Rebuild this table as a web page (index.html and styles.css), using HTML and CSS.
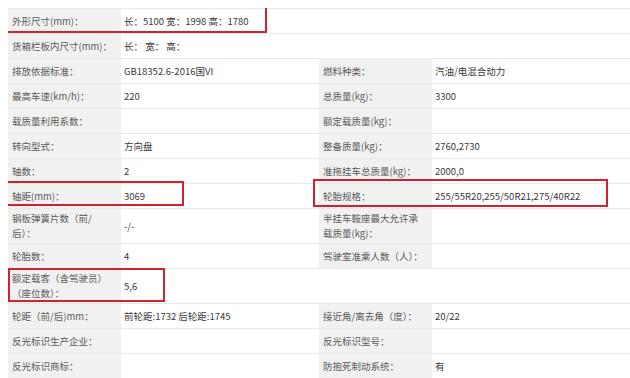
FILE: index.html
```html
<!DOCTYPE html>
<html lang="zh-CN">
<head>
<meta charset="utf-8">
<title>车辆参数</title>
<link rel="stylesheet" href="styles.css">
</head>
<body>
<div class="sheet">
  <div class="grid">
    <div class="k">外形尺寸(mm)：</div><div class="v span3">长：5100 宽：1998 高：1780</div>
    <div class="k">货箱栏板内尺寸(mm)：</div><div class="v span3">长： 宽： 高：</div>
    <div class="k">排放依据标准：</div><div class="v">GB18352.6-2016国VI</div><div class="k">燃料种类：</div><div class="v">汽油/电混合动力</div>
    <div class="k">最高车速(km/h)：</div><div class="v">220</div><div class="k">总质量(kg)：</div><div class="v">3300</div>
    <div class="k">载质量利用系数：</div><div class="v"></div><div class="k">额定载质量(kg)：</div><div class="v"></div>
    <div class="k">转向型式：</div><div class="v">方向盘</div><div class="k">整备质量(kg)：</div><div class="v">2760,2730</div>
    <div class="k">轴数：</div><div class="v">2</div><div class="k">准拖挂车总质量(kg)：</div><div class="v">2000,0</div>
    <div class="k">轴距(mm)：</div><div class="v">3069</div><div class="k">轮胎规格：</div><div class="v">255/55R20,255/50R21,275/40R22</div>
    <div class="k">钢板弹簧片数（前/后）：</div><div class="v">-/-</div><div class="k">半挂车鞍座最大允许承载质量(kg)：</div><div class="v"></div>
    <div class="k">轮胎数：</div><div class="v">4</div><div class="k">驾驶室准乘人数（人）：</div><div class="v"></div>
    <div class="k">额定载客（含驾驶员）（座位数）：</div><div class="v span3">5,6</div>
    <div class="k">轮距（前/后)mm：</div><div class="v">前轮距:1732 后轮距:1745</div><div class="k">接近角/离去角（度）：</div><div class="v">20/22</div>
    <div class="k">反光标识生产企业：</div><div class="v"></div><div class="k">反光标识型号：</div><div class="v"></div>
    <div class="k">反光标识商标：</div><div class="v"></div><div class="k">防抱死制动系统：</div><div class="v">有</div>
  </div>
  <div class="mark mark-size"></div>
  <div class="mark mark-wheelbase"></div>
  <div class="mark mark-tire"></div>
  <div class="mark mark-seats"></div>
</div>
</body>
</html>
```

FILE: styles.css
```css
html, body {
  background: #ffffff;
}
body {
  margin: 8px 0 0 8px;
  font-family: "Noto Sans CJK SC", "Noto Sans", sans-serif;
  font-size: 9.5px;
  color: #333333;
}
.sheet {
  position: relative;
  width: 622px;
}
.grid {
  display: grid;
  grid-template-columns: 113px 198px 113px 198px;
  border-top: 1px solid #e9e9e9;
}
.k, .v {
  box-sizing: border-box;
  min-height: 25px;
  padding: 2px 4px;
  line-height: 15px;
  border-bottom: 1px solid #e9e9e9;
  display: flex;
  align-items: center;
}
.k {
  background: #f1f1f1;
  color: #5a5a5a;
  padding-right: 6px;
}
.v {
  background: #ffffff;
  color: #3a3a3a;
  padding-left: 3px;
}
.span3 {
  grid-column: span 3;
}
.mark {
  position: absolute;
  box-sizing: border-box;
  border: 2px solid #cf2430;
}
.mark-size {
  left: -5px;
  top: -3px;
  width: 264px;
  height: 28px;
}
.mark-wheelbase {
  left: -3px;
  top: 173px;
  width: 179px;
  height: 25px;
}
.mark-tire {
  left: 305px;
  top: 171px;
  width: 295px;
  height: 28px;
}
.mark-seats {
  left: 0px;
  top: 260px;
  width: 157px;
  height: 34px;
}
```
